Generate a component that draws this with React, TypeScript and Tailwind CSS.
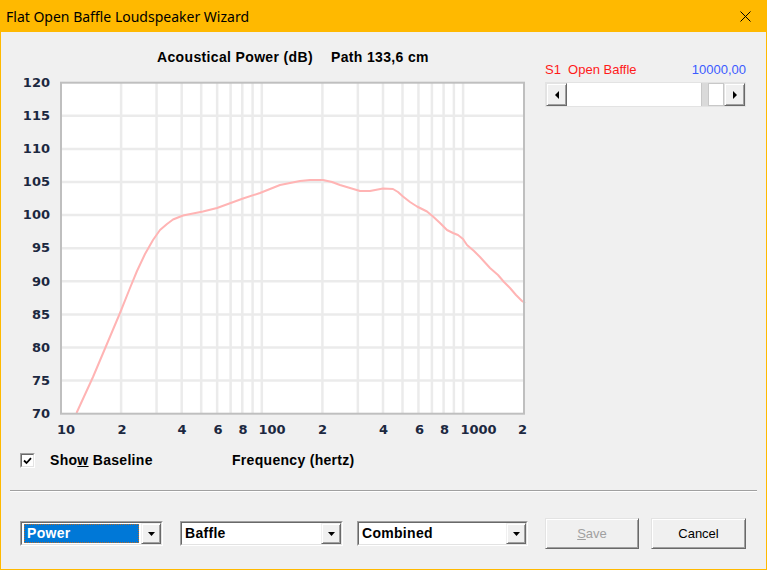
import React from "react"

const curve: [number, number][] = [
  [76.5, 413], [93, 377], [120, 313], [130, 288], [137, 271], [145, 254], [153, 240], [160, 230], [167, 224], [173, 219.5],
  [183, 215.5], [203, 211.5], [217, 208], [243, 198.5], [260, 193], [280, 185], [300, 181], [310, 180],
  [323, 180], [332, 182], [340, 185], [360, 191], [370, 191], [383, 188.5], [393, 189], [398, 192],
  [403, 196.5], [410, 202], [417, 206.5], [427, 211.5], [433, 216.5], [440, 223], [447, 230], [453, 233],
  [458, 235], [463, 239], [467, 245], [474, 251], [480, 257], [490, 268], [498, 275], [504, 282],
  [510, 288], [516, 295], [522, 301], [525, 303],
]

const freqX = (f: number) => 60.5 + 201.3 * Math.log10(f / 10)
const dbY = (db: number) => 82.7 + (120 - db) * 6.62

const gridFreqs = [20, 30, 40, 50, 60, 70, 80, 90, 100, 200, 300, 400, 500, 600, 700, 800, 900, 1000]
const gridDbs = [75, 80, 85, 90, 95, 100, 105, 110, 115]
const yLabels = ["120", "115", "110", "105", "100", "95", "90", "85", "80", "75", "70"]
const xLabels: [string, number][] = [
  ["10", 66], ["2", 122], ["4", 182], ["6", 218], ["8", 243], ["100", 272], ["2", 322.5],
  ["4", 383.5], ["6", 419.5], ["8", 444.5], ["1000", 478.5], ["2", 522.5],
]

function Plot() {
  return (
    <svg width="467" height="335" viewBox="59 81 467 335" className="block">
      <rect x="61" y="82.7" width="463" height="331" fill="#ffffff" />
      {gridFreqs.map((f) => (
        <line key={f} x1={freqX(f)} x2={freqX(f)} y1="83" y2="413" stroke="#ebebeb" strokeWidth="2.5" />
      ))}
      {gridDbs.map((d) => (
        <line key={d} x1="61" x2="524" y1={dbY(d)} y2={dbY(d)} stroke="#ebebeb" strokeWidth="2.5" />
      ))}
      <polyline
        points={curve.map((p) => p.join(",")).join(" ")}
        fill="none"
        stroke="#ffb4b4"
        strokeWidth="2"
        strokeLinejoin="round"
      />
      <rect x="61" y="82.7" width="463" height="331" fill="none" stroke="#bfbfbf" strokeWidth="2" />
    </svg>
  )
}

function DropButton() {
  return (
    <div className="flex h-full w-[20px] items-center justify-center border border-t-[#f0f0f0] border-l-[#f0f0f0] border-b-[#696969] border-r-[#696969] bg-[#f0f0f0] shadow-[inset_1px_1px_0_#ffffff,inset_-1px_-1px_0_#a0a0a0]">
      <svg width="7" height="4" viewBox="0 0 7 4">
        <path d="M0 0h7L3.5 4z" fill="#000" />
      </svg>
    </div>
  )
}

function Combo({ label, width, selected }: { label: string; width: string; selected?: boolean }) {
  return (
    <div className={`flex h-[25px] ${width} border border-t-[#a0a0a0] border-l-[#a0a0a0] border-b-white border-r-white`}>
      <div className="flex flex-1 border border-t-[#696969] border-l-[#696969] border-b-[#e3e3e3] border-r-[#e3e3e3] bg-white">
        <div className="flex flex-1 items-stretch">
          {selected ? (
            <div className="my-[1px] ml-[2px] mr-[2px] flex flex-1 items-center border border-dotted border-[#b86a28] bg-[#0078d7] pl-[2px] text-white">
              {label}
            </div>
          ) : (
            <div className="flex flex-1 items-center pl-[3px] text-black">{label}</div>
          )}
        </div>
        <DropButton />
      </div>
    </div>
  )
}

function WinButton({ children, width, disabled }: { children: React.ReactNode; width: string; disabled?: boolean }) {
  return (
    <div
      className={`flex h-[31px] ${width} items-center justify-center border border-t-[#e3e3e3] border-l-[#e3e3e3] border-b-[#696969] border-r-[#696969] bg-[#f0f0f0] shadow-[inset_1px_1px_0_#ffffff,inset_-1px_-1px_0_#a0a0a0] text-[13px] font-normal tracking-normal ${disabled ? "text-[#a0a0a0]" : "text-black"}`}
    >
      {children}
    </div>
  )
}

function ArrowButton({ dir }: { dir: "left" | "right" }) {
  return (
    <div className="flex h-full w-[21px] items-center justify-center border border-t-[#e3e3e3] border-l-[#e3e3e3] border-b-[#696969] border-r-[#696969] bg-[#f0f0f0] shadow-[inset_1px_1px_0_#ffffff,inset_-1px_-1px_0_#a0a0a0]">
      <svg width="4" height="8" viewBox="0 0 4 8">
        {dir === "left" ? <path d="M4 0v8L0 4z" fill="#000" /> : <path d="M0 0v8l4-4z" fill="#000" />}
      </svg>
    </div>
  )
}

export default function App() {
  return (
    <div className="flex h-[570px] w-[767px] flex-col bg-[#ffb900] px-[1px] pb-[1px] font-['Liberation_Sans',Arial,sans-serif]">
      {/* title bar */}
      <div className="flex h-[32px] items-center justify-between pl-[5px] pr-[15px]">
        <span className="font-['Noto_Sans',sans-serif] text-[14px] text-black">Flat Open Baffle Loudspeaker Wizard</span>
        <svg width="11" height="11" viewBox="0 0 11 11">
          <path d="M0.5 0.5l10 10M10.5 0.5l-10 10" stroke="#000" strokeWidth="1" />
        </svg>
      </div>

      <div className="flex flex-1 flex-col bg-[#f0f0f0]">
        <div className="flex">
          {/* chart column */}
          <div className="flex w-[530px] flex-col">
            <div className="mt-[17px] flex h-[16px] items-center gap-[18px] pl-[156px] text-[14px] font-bold leading-[16px] tracking-[0.35px] text-black">
              <span>Acoustical Power (dB)</span>
              <span>Path 133,6 cm</span>
            </div>
            <div className="mt-[11px] flex">
              <div className="flex h-[345px] w-[49px] flex-col justify-between font-['DejaVu_Sans',sans-serif] text-[13px] font-bold text-[#1c2840]">
                {yLabels.map((l) => (
                  <div key={l} className="h-[14px] text-right leading-[14px]">
                    {l}
                  </div>
                ))}
              </div>
              <div className="ml-[9px] mt-[5px] flex flex-col">
                <Plot />
                <div className="relative mt-[6px] h-[16px] font-['DejaVu_Sans',sans-serif] text-[13px] font-bold leading-[16px] text-[#1c2840]">
                  {xLabels.map(([t, x], i) => (
                    <span key={i} className="absolute top-0 -translate-x-1/2" style={{ left: x - 59 }}>
                      {t}
                    </span>
                  ))}
                </div>
              </div>
            </div>
          </div>

          {/* slider column */}
          <div className="ml-[14px] flex w-[201px] flex-col">
            <div className="mt-[30px] flex h-[16px] items-center justify-between text-[13px] leading-[16px]">
              <span className="whitespace-pre text-[#ff1a1a]">S1  Open Baffle</span>
              <span className="text-[#3b5bff]">10000,00</span>
            </div>
            <div className="mt-[4px] flex h-[25px] border border-[#e3e3e3]">
              <ArrowButton dir="left" />
              <div className="flex-1 bg-white" />
              <div className="w-[7px] border-l border-[#c8c8c8] bg-[#dadada]" />
              <div className="w-[16px] border border-[#c8c8c8] bg-white" />
              <ArrowButton dir="right" />
            </div>
          </div>
        </div>

        {/* baseline row */}
        <div className="mt-[15px] flex h-[15px] items-center text-[14px] font-bold tracking-[0.3px] text-black">
          <div className="ml-[19px] flex h-[15px] w-[15px] items-center justify-center border border-t-[#a0a0a0] border-l-[#a0a0a0] border-b-white border-r-white">
            <div className="flex h-[13px] w-[13px] items-center justify-center border border-t-[#696969] border-l-[#696969] border-b-[#e3e3e3] border-r-[#e3e3e3] bg-white">
              <svg width="9" height="8" viewBox="0 0 9 8">
                <path d="M1 3.5l2.5 2.5L8 1.2" fill="none" stroke="#000" strokeWidth="1.8" />
              </svg>
            </div>
          </div>
          <span className="ml-[15px] w-[182px]">
            Sho<span className="underline">w</span> Baseline
          </span>
          <span>Frequency (hertz)</span>
        </div>

        {/* separator */}
        <div className="mx-[9px] mt-[22px] h-[2px] border-t border-b border-t-[#a0a0a0] border-b-white" />

        {/* bottom controls */}
        <div className="mt-[26px] flex h-[31px] items-center pl-[19px] text-[14px] font-bold tracking-[0.3px]">
          <Combo label="Power" width="w-[143px]" selected />
          <div className="ml-[17px]">
            <Combo label="Baffle" width="w-[163px]" />
          </div>
          <div className="ml-[14px]">
            <Combo label="Combined" width="w-[171px]" />
          </div>
          <div className="ml-[17px]">
            <WinButton width="w-[94px]" disabled>
              <span>
                <span className="underline">S</span>ave
              </span>
            </WinButton>
          </div>
          <div className="ml-[12px]">
            <WinButton width="w-[95px]">Cancel</WinButton>
          </div>
        </div>
      </div>
    </div>
  )
}
